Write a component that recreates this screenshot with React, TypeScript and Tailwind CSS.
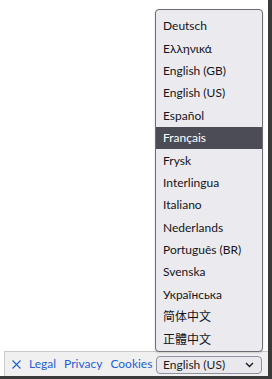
import React from "react";

const langs = [
  "Deutsch",
  "Ελληνικά",
  "English (GB)",
  "English (US)",
  "Español",
  "Français",
  "Frysk",
  "Interlingua",
  "Italiano",
  "Nederlands",
  "Português (BR)",
  "Svenska",
  "Українська",
  "简体中文",
  "正體中文",
];

export default function App() {
  return (
    <div
      className="w-[272px] h-[379px] flex flex-col bg-white overflow-hidden"
      style={{ fontFamily: "Lato, 'Noto Sans CJK SC', sans-serif" }}
    >
      <div className="flex flex-1 min-h-0">
        <div className="relative flex-1 flex flex-col justify-end">
          <div className="ml-[4px] h-[25px] bg-[#f0f0f0] border-t border-l border-[#c8c8c8] flex items-center pl-[7px] pr-[6px] text-[12px] text-[#1f5fd6]">
            <svg width="9" height="9" viewBox="0 0 9 9" className="mr-[8px] mt-[1px]">
              <path d="M0.5 0.5 L8.5 8.5 M8.5 0.5 L0.5 8.5" stroke="#1f5fd6" strokeWidth="1.1" fill="none" />
            </svg>
            <span className="mr-[8px]">Legal</span>
            <span className="mr-[8px]">Privacy</span>
            <span>Cookies</span>
            <div className="ml-auto w-[106px] h-[18px] mt-[1px] rounded-[4px] border border-[#8f8f9d] bg-[#e9e9ed] flex items-center pl-[6px] pr-[7px] text-[12px] text-[#1b1b1b]">
              <span>English (US)</span>
              <svg className="ml-auto" width="9" height="6" viewBox="0 0 9 6">
                <path d="M1 1 L4.5 4.5 L8 1" fill="none" stroke="#1b1b1b" strokeWidth="1.4" />
              </svg>
            </div>
          </div>
          <div className="absolute left-[155px] top-[9px] w-[108px] h-[343px] rounded-[4px] border border-[#6b6b70] bg-[#ebebef] pt-[5px] flex flex-col text-[12px] text-[#15141a] shadow-[0_1px_2px_rgba(0,0,0,0.15)]">
            {langs.map((l) => (
              <div
                key={l}
                className={
                  "h-[22.4px] shrink-0 flex items-center pl-[7px] " +
                  (l === "Français" ? "bg-[#4c4c56] text-white" : "")
                }
              >
                {l}
              </div>
            ))}
          </div>
        </div>
        <div className="w-[4px] bg-[#3a3a3a]" />
      </div>
      <div className="h-[3px] bg-[#3a3a3a]" />
    </div>
  );
}
